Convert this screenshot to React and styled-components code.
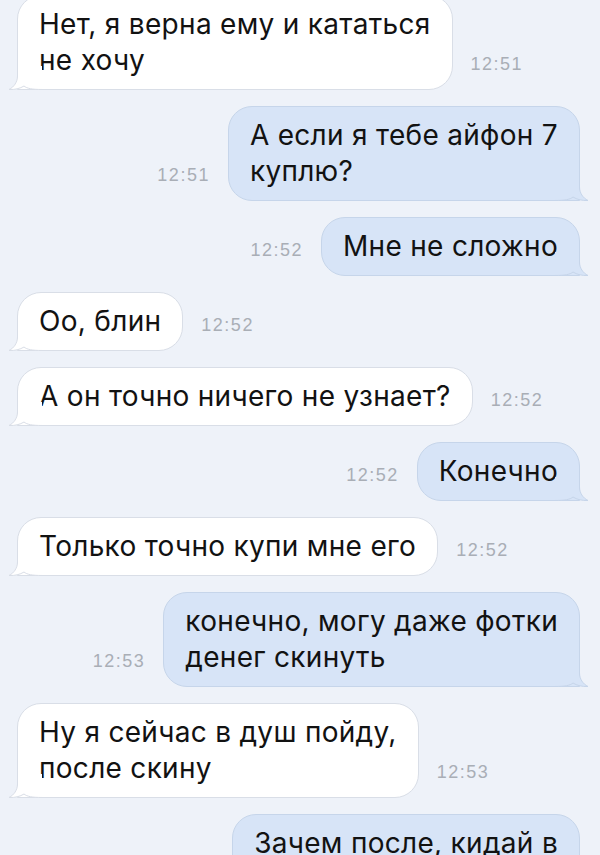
import React from 'react';
import styled, { createGlobalStyle } from 'styled-components';

// chat colours
// page: #eef2f9
// incoming: #fff / border #d9dee7
// outgoing: #d7e4f7 / border #c6d5ea

const GlobalStyle = createGlobalStyle`
  html, body {
    margin: 0;
    padding: 0;
    height: 855px;
    overflow: hidden;
    background: #eef2f9;
  }
  body {
    font-family: Inter, "Liberation Sans", Arial, sans-serif;
  }
`

const Chat = styled.div`
  display: flex;
  flex-direction: column;
  gap: 16px;
  margin-top: -5px;
`

const Row = styled.div`
  display: flex;
  align-items: last baseline;
  justify-content: ${p => (p.out ? 'flex-end' : 'flex-start')};
  gap: 18px;
  padding: ${p => (p.out ? '0 20px 0 0' : '0 0 0 17px')};
`

const Bubble = styled.div`
  position: relative;
  padding: 10px 21px 11px;
  font-size: 28px;
  line-height: 36px;
  letter-spacing: 0.3px;
  color: #121212;
  white-space: nowrap;
  background: ${p => (p.out ? '#d7e4f7' : '#ffffff')};
  border: 1px solid ${p => (p.out ? '#c6d5ea' : '#d9dee7')};
  border-radius: 24px;
  ${p => (p.out ? 'border-bottom-right-radius: 0;' : 'border-bottom-left-radius: 0;')}
`

const Tail = styled.svg`
  position: absolute;
  bottom: -1px;
  width: 34px;
  height: 24px;
  overflow: visible;
  ${p => (p.out ? 'right: -10px; transform: scaleX(-1);' : 'left: -10px;')}
`

const Time = styled.span`
  font-family: "Liberation Sans", Arial, sans-serif;
  font-size: 18px;
  letter-spacing: 1.5px;
  color: #a9aeb6;
  white-space: nowrap;
`

const TAIL = 'M9.5 0 V10 C9.5 16 6 21 1 23.5 C7 23.8 12 22.5 16 20 C19 22.5 24 23.5 34 23.5'

const messages = [
  { out: false, time: '12:51', lines: ['Нет, я верна ему и кататься', 'не хочу'] },
  { out: true, time: '12:51', lines: ['А если я тебе айфон 7', 'куплю?'] },
  { out: true, time: '12:52', lines: ['Мне не сложно'] },
  { out: false, time: '12:52', lines: ['Оо, блин'] },
  { out: false, time: '12:52', lines: ['А он точно ничего не узнает?'] },
  { out: true, time: '12:52', lines: ['Конечно'] },
  { out: false, time: '12:52', lines: ['Только точно купи мне его'] },
  { out: true, time: '12:53', lines: ['конечно, могу даже фотки', 'денег скинуть'] },
  { out: false, time: '12:53', lines: ['Ну я сейчас в душ пойду,', 'после скину'] },
  { out: true, time: '', lines: ['Зачем после, кидай в', 'сейчас'] },
]

const Message = ({ out, time, lines }) => {
  const fill = out ? '#d7e4f7' : '#ffffff'
  const stroke = out ? '#c6d5ea' : '#d9dee7'
  const bubble = (
    <Bubble out={out}>
      {lines.map((l, i) => (
        <div key={i}>{l}</div>
      ))}
      <Tail out={out} viewBox="0 0 34 24">
        <path d={TAIL + ' V0 Z'} fill={fill} />
        <path d={TAIL} fill="none" stroke={stroke} strokeWidth="1" />
      </Tail>
    </Bubble>
  )
  const stamp = <Time>{time}</Time>
  return (
    <Row out={out}>
      {out ? stamp : bubble}
      {out ? bubble : stamp}
    </Row>
  )
}

class App extends React.Component {
  render() {
    return (
      <>
        <GlobalStyle />
        <Chat>
          {messages.map((m, i) => (
            <Message key={i} {...m} />
          ))}
        </Chat>
      </>
    )
  }
}

export default App;
